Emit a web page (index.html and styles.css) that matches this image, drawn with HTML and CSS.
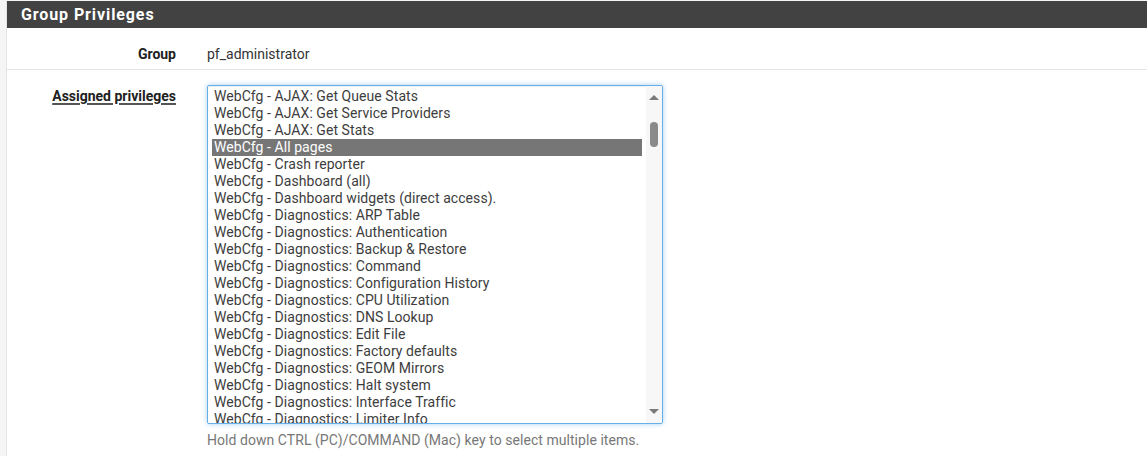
FILE: index.html
```html
<!DOCTYPE html>
<html lang="en">
<head>
<meta charset="utf-8">
<title>Group Privileges</title>
<link rel="stylesheet" href="styles.css">
</head>
<body>
<div class="page">
  <div class="panel">
    <div class="panel-heading">Group Privileges</div>
    <div class="form-row row-static">
      <div class="form-label">Group</div>
      <div class="form-value">pf_administrator</div>
    </div>
    <div class="form-row row-select">
      <div class="form-label"><span class="label-link">Assigned privileges</span></div>
      <div class="form-value">
        <div class="listbox" role="listbox" aria-multiselectable="true">
          <div class="options">
            <div class="opt">WebCfg - AJAX: Get Queue Stats</div>
            <div class="opt">WebCfg - AJAX: Get Service Providers</div>
            <div class="opt">WebCfg - AJAX: Get Stats</div>
            <div class="opt selected">WebCfg - All pages</div>
            <div class="opt">WebCfg - Crash reporter</div>
            <div class="opt">WebCfg - Dashboard (all)</div>
            <div class="opt">WebCfg - Dashboard widgets (direct access).</div>
            <div class="opt">WebCfg - Diagnostics: ARP Table</div>
            <div class="opt">WebCfg - Diagnostics: Authentication</div>
            <div class="opt">WebCfg - Diagnostics: Backup &amp; Restore</div>
            <div class="opt">WebCfg - Diagnostics: Command</div>
            <div class="opt">WebCfg - Diagnostics: Configuration History</div>
            <div class="opt">WebCfg - Diagnostics: CPU Utilization</div>
            <div class="opt">WebCfg - Diagnostics: DNS Lookup</div>
            <div class="opt">WebCfg - Diagnostics: Edit File</div>
            <div class="opt">WebCfg - Diagnostics: Factory defaults</div>
            <div class="opt">WebCfg - Diagnostics: GEOM Mirrors</div>
            <div class="opt">WebCfg - Diagnostics: Halt system</div>
            <div class="opt">WebCfg - Diagnostics: Interface Traffic</div>
            <div class="opt">WebCfg - Diagnostics: Limiter Info</div>
          </div>
          <div class="scrollbar">
            <div class="arrow-up"></div>
            <div class="track"><div class="thumb"></div></div>
            <div class="arrow-down"></div>
          </div>
        </div>
        <div class="help">Hold down CTRL (PC)/COMMAND (Mac) key to select multiple items.</div>
      </div>
    </div>
  </div>
</div>
</body>
</html>
```
FILE: styles.css
```css
html, body {
  margin: 0;
  padding: 0;
}
body {
  font-family: Roboto, "Liberation Sans", Arial, sans-serif;
  font-size: 14px;
  color: #212121;
  background: #f5f5f5;
  overflow: hidden;
  height: 456px;
}
.page {
  padding-left: 6px;
  padding-top: 1px;
  height: 455px;
  background: #f5f5f5;
}
.panel {
  background: #fff;
  border-left: 1px solid #e4e4e4;
  height: 100%;
}
.panel-heading {
  background: #424242;
  color: #fff;
  font-weight: 700;
  font-size: 16px;
  height: 27px;
  line-height: 27px;
  padding-left: 14px;
  letter-spacing: 0.9px;
}
.form-row {
  display: flex;
  gap: 31px;
}
.form-label {
  width: 169px;
  flex: none;
  text-align: right;
  font-weight: 700;
  color: #212121;
}
.form-value {
  flex: 1;
  color: #212121;
}
.row-static {
  padding: 18px 0 6px;
  line-height: 17px;
  border-bottom: 1px solid #e5e5e5;
}
.row-static .form-value {
  color: #333;
}
.row-select {
  padding-top: 15px;
}
.row-select .form-label {
  padding-top: 3px;
  line-height: 17px;
}
.label-link {
  text-decoration: underline;
  text-decoration-color: #555;
  text-decoration-thickness: 2px;
  text-underline-offset: 2px;
}
.listbox {
  width: 454px;
  height: 337px;
  border: 1px solid #66afe9;
  border-radius: 2px;
  box-shadow: inset 0 1px 1px rgba(0,0,0,.075), 0 0 5px rgba(102,175,233,.6);
  display: flex;
  overflow: hidden;
  background: #fff;
}
.options {
  width: 430px;
  padding: 2px 0 0 4px;
  overflow: hidden;
  flex: none;
}
.opt {
  height: 17px;
  line-height: 17px;
  padding-left: 2px;
  white-space: nowrap;
  color: #3d3d3d;
  letter-spacing: 0.06px;
}
.opt.selected {
  background: #767676;
  color: #fff;
}
.scrollbar {
  margin-left: 4px;
  width: 16px;
  flex: none;
  background: #f7f7f7;
  display: flex;
  flex-direction: column;
  align-items: center;
}
.arrow-up, .arrow-down {
  width: 0;
  height: 0;
  border-left: 5px solid transparent;
  border-right: 5px solid transparent;
  flex: none;
}
.arrow-up {
  margin-top: 9px;
  border-bottom: 5px solid #7a7a7a;
}
.arrow-down {
  margin-bottom: 9px;
  border-top: 5px solid #7a7a7a;
}
.track {
  flex: 1;
  width: 100%;
  display: flex;
  justify-content: center;
}
.thumb {
  margin-top: 22px;
  width: 8px;
  height: 25px;
  border-radius: 4px;
  background: #8a8a8a;
}
.help {
  margin-top: 8px;
  color: #777;
  line-height: 17px;
  letter-spacing: 0.05px;
}
```
